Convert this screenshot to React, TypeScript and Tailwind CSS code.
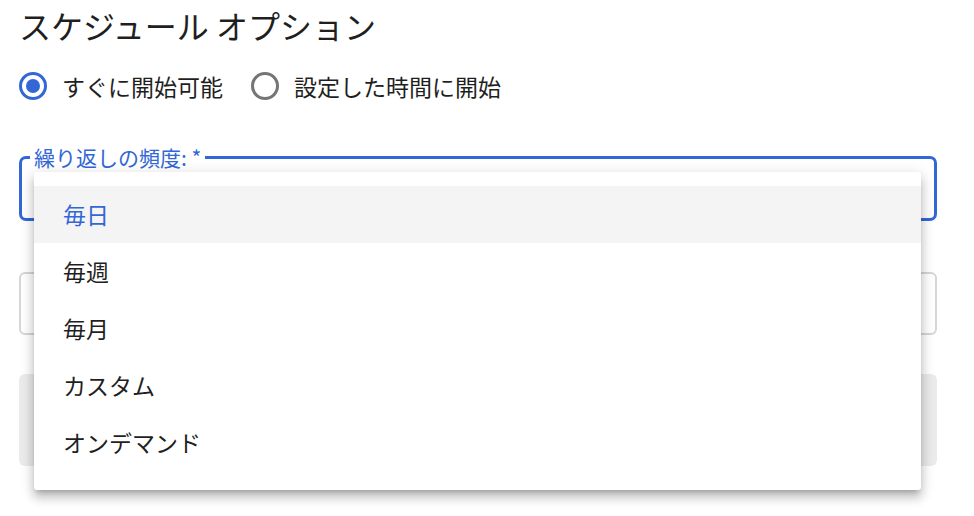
const options = ['毎日', '毎週', '毎月', 'カスタム', 'オンデマンド'];

function Radio({ checked, label }: { checked?: boolean; label: string }) {
  return (
    <label className="flex items-center gap-[15px]">
      <span
        className={`flex h-[28px] w-[28px] items-center justify-center rounded-full border-[3px] ${
          checked ? 'border-[#3367d6]' : 'border-[#757575]'
        }`}
      >
        {checked && <span className="h-[14px] w-[14px] rounded-full bg-[#3367d6]" />}
      </span>
      <span className="text-[23px] leading-[30px] text-[#1f1f1f]">{label}</span>
    </label>
  );
}

export default function App() {
  return (
    <div
      className="relative h-[516px] w-[974px] overflow-hidden bg-white px-[19px] text-[#1f1f1f]"
      style={{ fontFamily: '"Noto Sans CJK JP", "Noto Sans", sans-serif' }}
    >
      <h2 className="pt-[4px] text-[32px] leading-[42px] font-normal">スケジュール オプション</h2>

      <div className="mt-[25px] flex items-center gap-[28px]">
        <Radio checked label="すぐに開始可能" />
        <Radio label="設定した時間に開始" />
      </div>

      <fieldset className="mt-[43px] h-[77px] w-[918px] rounded-[7px] border-[3px] border-[#3367d6]">
        <legend className="ml-[8px] px-[4px] text-[21px] leading-[26px] text-[#3367d6]">繰り返しの頻度: *</legend>
      </fieldset>

      <div className="mt-[51px] h-[63px] w-[918px] rounded-[6px] border-2 border-[#d6d6d6]" />

      <div className="mt-[39px] h-[92px] w-[918px] rounded-[6px] bg-[#ebebeb]" />

      <ul className="absolute left-[34px] top-[172px] w-[887px] rounded-[3px] bg-white pt-[14px] pb-[19px] shadow-[0_5px_5px_-3px_rgba(0,0,0,0.2),0_8px_10px_1px_rgba(0,0,0,0.14),0_3px_14px_2px_rgba(0,0,0,0.12)]">
        {options.map((o, i) => (
          <li
            key={o}
            className={`flex h-[57px] items-center pl-[29px] text-[23px] ${
              i === 0 ? 'bg-[#f4f4f4] text-[#3367d6]' : 'text-[#1f1f1f]'
            }`}
          >
            {o}
          </li>
        ))}
      </ul>
    </div>
  );
}
